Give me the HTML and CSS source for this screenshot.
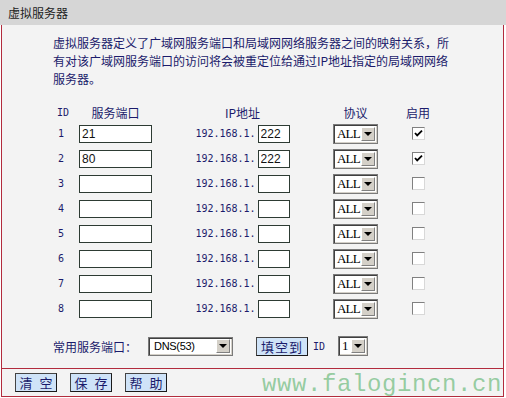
FILE: index.html
```html
<!DOCTYPE html>
<html lang="zh-CN">

<head>
    <meta charset="UTF-8" />
    <title>虚拟服务器</title>
    <link rel="stylesheet" href="styles.css">
</head>

<body>
    <div class="panel">
        <div class="title">虚拟服务器</div>

        <div class="content">
            <p class="intro">虚拟服务器定义了广域网服务端口和局域网网络服务器之间的映射关系，所<br>有对该广域网服务端口的访问将会被重定位给通过IP地址指定的局域网网络<br>服务器。</p>

            <div class="vs-grid">
                <div class="hd id">ID</div>
                <div class="hd">服务端口</div>
                <div class="hd">IP地址</div>
                <div class="hd">协议</div>
                <div class="hd">启用</div>

                <div class="num">1</div>
                <div class="cell"><input class="port" type="text" value="21"></div>
                <div class="cell ip"><span>192.168.1.</span><input class="host" type="text" value="222"></div>
                <div class="cell"><span class="sel"><span class="val">ALL</span><span class="arrow"></span></span></div>
                <div class="cell"><span class="check"><svg width="11" height="11" viewBox="0 0 11 11"><path d="M2 5 L4.2 7.4 L9 2.6" fill="none" stroke="#000" stroke-width="1.8"/></svg></span></div>

                <div class="num">2</div>
                <div class="cell"><input class="port" type="text" value="80"></div>
                <div class="cell ip"><span>192.168.1.</span><input class="host" type="text" value="222"></div>
                <div class="cell"><span class="sel"><span class="val">ALL</span><span class="arrow"></span></span></div>
                <div class="cell"><span class="check"><svg width="11" height="11" viewBox="0 0 11 11"><path d="M2 5 L4.2 7.4 L9 2.6" fill="none" stroke="#000" stroke-width="1.8"/></svg></span></div>

                <div class="num">3</div>
                <div class="cell"><input class="port" type="text"></div>
                <div class="cell ip"><span>192.168.1.</span><input class="host" type="text"></div>
                <div class="cell"><span class="sel"><span class="val">ALL</span><span class="arrow"></span></span></div>
                <div class="cell"><span class="check"></span></div>

                <div class="num">4</div>
                <div class="cell"><input class="port" type="text"></div>
                <div class="cell ip"><span>192.168.1.</span><input class="host" type="text"></div>
                <div class="cell"><span class="sel"><span class="val">ALL</span><span class="arrow"></span></span></div>
                <div class="cell"><span class="check"></span></div>

                <div class="num">5</div>
                <div class="cell"><input class="port" type="text"></div>
                <div class="cell ip"><span>192.168.1.</span><input class="host" type="text"></div>
                <div class="cell"><span class="sel"><span class="val">ALL</span><span class="arrow"></span></span></div>
                <div class="cell"><span class="check"></span></div>

                <div class="num">6</div>
                <div class="cell"><input class="port" type="text"></div>
                <div class="cell ip"><span>192.168.1.</span><input class="host" type="text"></div>
                <div class="cell"><span class="sel"><span class="val">ALL</span><span class="arrow"></span></span></div>
                <div class="cell"><span class="check"></span></div>

                <div class="num">7</div>
                <div class="cell"><input class="port" type="text"></div>
                <div class="cell ip"><span>192.168.1.</span><input class="host" type="text"></div>
                <div class="cell"><span class="sel"><span class="val">ALL</span><span class="arrow"></span></span></div>
                <div class="cell"><span class="check"></span></div>

                <div class="num">8</div>
                <div class="cell"><input class="port" type="text"></div>
                <div class="cell ip"><span>192.168.1.</span><input class="host" type="text"></div>
                <div class="cell"><span class="sel"><span class="val">ALL</span><span class="arrow"></span></span></div>
                <div class="cell"><span class="check"></span></div>
            </div>

            <div class="common">
                <span class="common-label">常用服务端口：</span>
                <span class="sel sel-dns"><span class="val val-dns">DNS(53)</span><span class="arrow"></span></span>
                <button class="btn btn-fill" type="button">填空到</button>
                <span class="common-id">ID</span>
                <span class="sel sel-id"><span class="val">1</span><span class="arrow"></span></span>
            </div>
        </div>

        <div class="actions">
            <button class="btn" type="button">清 空</button>
            <button class="btn" type="button">保 存</button>
            <button class="btn" type="button">帮 助</button>
        </div>

        <!-- site watermark over the bottom corner -->
        <div class="watermark">www.falogincn.cn</div>
    </div>
</body>

</html>
```

FILE: styles.css
```css
html,
body {
    margin: 0;
    padding: 0;
    background: #fff;
}

body {
    font-family: "Noto Sans CJK SC", sans-serif;
    font-size: 12px;
    color: #1b1b6b;
}

.panel {
    position: relative;
    width: 506px;
    height: 398px;
}

.title {
    height: 25px;
    line-height: 25px;
    padding-left: 8px;
    background: #d6d6d6;
    color: #222;
}

.content {
    box-sizing: border-box;
    height: 344px;
    margin: 0 2px 0 1px;
    border-left: 1px solid #b22b3d;
    border-right: 1px solid #b22b3d;
    border-bottom: 1px solid #b22b3d;
    background: #f3f3f3;
}

.intro {
    margin: 0;
    padding: 9px 0 0 51px;
    line-height: 18px;
}

.vs-grid {
    display: grid;
    grid-template-columns: 22px 73px 181px 45px 80px;
    grid-template-rows: 18px repeat(8, 25px);
    align-items: center;
    margin: 15px 0 0 55px;
}

.hd {
    text-align: center;
}

.hd.id,
.num {
    text-align: left;
    font-family: "DejaVu Sans Mono", monospace;
    font-size: 10px;
}

.num {
    padding-left: 1px;
}

.cell {
    display: flex;
    justify-content: center;
    align-items: center;
}

.ip {
    gap: 2px;
    font-family: "DejaVu Sans Mono", monospace;
    font-size: 10px;
}

input[type="text"] {
    box-sizing: border-box;
    height: 18px;
    margin: 0;
    padding: 0 2px;
    border: 1px solid #2d3b33;
    background: #fff;
    font-family: "Liberation Sans", sans-serif;
    font-size: 12px;
    color: #111;
}

.port {
    width: 73px;
    padding-left: 3px;
}

.host {
    width: 32px;
}

.sel {
    display: inline-flex;
    align-items: center;
    box-sizing: border-box;
    width: 45px;
    height: 20px;
    border: 1px solid #7a7a7a;
    box-shadow: inset 1px 1px 0 #404040, inset -1px -1px 0 #d4d0c8;
    background: #fff;
}

.val {
    flex: 1;
    padding-left: 3px;
    font-family: "Liberation Serif", serif;
    font-size: 13px;
    letter-spacing: -0.8px;
    color: #000;
    white-space: nowrap;
}

.arrow {
    display: flex;
    align-items: center;
    justify-content: center;
    box-sizing: border-box;
    width: 14px;
    height: 14px;
    margin-right: 2px;
    background: #d4d0c8;
    border: 1px solid;
    border-color: #fff #808080 #808080 #fff;
}

.arrow::after {
    content: "";
    border-left: 4px solid transparent;
    border-right: 4px solid transparent;
    border-top: 4px solid #000;
}

.check {
    display: inline-flex;
    box-sizing: border-box;
    width: 13px;
    height: 13px;
    border: 1px solid;
    border-color: #808080 #d8d8d8 #d8d8d8 #808080;
    background: #fff;
}

.common {
    display: flex;
    align-items: center;
    height: 20px;
    margin-top: 15px;
    padding-left: 51px;
}

.common-label {
    width: 95px;
}

.sel-dns {
    width: 85px;
    height: 19px;
}

.val-dns {
    padding-left: 5px;
    font-family: "Liberation Sans Narrow", "Liberation Sans", sans-serif;
    font-size: 11px;
    letter-spacing: -0.3px;
}

.sel-id {
    width: 30px;
    margin-left: 13px;
}

.common-id {
    margin-left: 5px;
    font-family: "DejaVu Sans Mono", monospace;
    font-size: 10px;
}

.btn {
    box-sizing: border-box;
    width: 42px;
    height: 19px;
    margin: 0;
    padding: 0;
    border: 1px solid #444;
    border-right-color: #1a1a1a;
    border-bottom-color: #1a1a1a;
    background: #cfe3f8;
    font-family: "Noto Sans CJK SC", sans-serif;
    font-size: 13px;
    line-height: 17px;
    word-spacing: 4px;
    color: #1b1b6b;
}

.btn-fill {
    width: 52px;
    margin-left: 23px;
    word-spacing: 0;
    letter-spacing: 1px;
}

.actions {
    box-sizing: border-box;
    display: flex;
    align-items: center;
    gap: 13px;
    height: 28px;
    margin: 0 2px 0 1px;
    padding-left: 13px;
    border-left: 1px solid #b22b3d;
    border-right: 1px solid #b22b3d;
    border-bottom: 1px solid #b22b3d;
    background: #f3f3f3;
}

.watermark {
    position: absolute;
    left: 262px;
    top: 375px;
    line-height: 20px;
    font-family: "Liberation Mono", monospace;
    font-size: 24px;
    letter-spacing: 0.6px;
    color: rgba(70, 170, 90, 0.55);
    pointer-events: none;
    white-space: nowrap;
}
```
